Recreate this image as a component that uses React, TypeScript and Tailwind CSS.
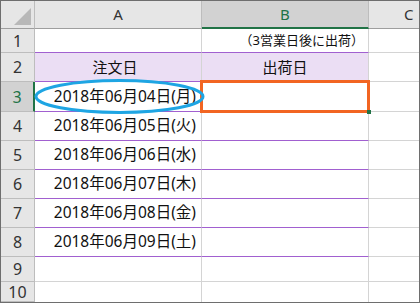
import React from "react";

const dates = [
  "2018年06月04日(月)",
  "2018年06月05日(火)",
  "2018年06月06日(水)",
  "2018年06月07日(木)",
  "2018年06月08日(金)",
  "2018年06月09日(土)",
];

const rowHeights = ["h-[30px]", "h-[29px]", "h-[29px]", "h-[29px]", "h-[29px]", "h-[29px]"];

function RowHead({ n, active = false }: { n: string; active?: boolean }) {
  return (
    <div
      className={
        active
          ? "w-[34px] shrink-0 flex items-center justify-center text-[16px] bg-[#d2d2d2] border-b border-b-[#bdbdbd] border-r-2 border-r-[#217346] text-[#217346]"
          : "w-[34px] shrink-0 flex items-center justify-center text-[16px] bg-[#e6e6e6] border-b border-r border-[#bdbdbd] text-[#333]"
      }
    >
      {n}
    </div>
  );
}

export default function App() {
  return (
    <div className="w-[420px] h-[303px] overflow-hidden bg-white border border-[#6e6e6e] font-['Noto_Sans','Noto_Sans_CJK_JP',sans-serif] text-[15px] leading-none text-[#111]">
      <div className="relative w-[418px] h-[301px]">
        {/* column headers */}
        <div className="flex h-[28px]">
          <div className="w-[34px] shrink-0 relative bg-[#e6e6e6] border-r border-r-[#bdbdbd] border-b border-b-[#9e9e9e]">
            <svg className="absolute left-0 top-0" width="33" height="27" viewBox="0 0 33 27">
              <polygon points="30,7 30,24 13,24" fill="#b8b8b8" />
            </svg>
          </div>
          <div className="w-[167px] shrink-0 flex items-center justify-center bg-[#e6e6e6] border-r border-r-[#bdbdbd] border-b border-b-[#9e9e9e] text-[#333]">
            A
          </div>
          <div className="w-[167px] shrink-0 flex items-center justify-center bg-[#d2d2d2] border-r border-r-[#bdbdbd] border-b-2 border-b-[#217346] text-[#217346]">
            B
          </div>
          <div className="flex-1 flex items-center pl-[35px] bg-[#e6e6e6] border-b border-b-[#9e9e9e] text-[#333]">
            C
          </div>
        </div>

        {/* row 1 */}
        <div className="flex h-[24px]">
          <RowHead n="1" />
          <div className="w-[167px] shrink-0 border-r border-r-[#d4d4d4] border-b border-b-[#a160d0]" />
          <div className="w-[167px] shrink-0 flex items-center justify-end pr-[4px] text-[13px] border-r border-r-[#d4d4d4] border-b border-b-[#a160d0]">
            （3営業日後に出荷）
          </div>
          <div className="flex-1 border-b border-[#d4d4d4]" />
        </div>

        {/* row 2 */}
        <div className="flex h-[29px]">
          <RowHead n="2" />
          <div className="w-[167px] shrink-0 flex items-center justify-center pr-[6px] bg-[#ebdef4] border-r border-r-[#d4d4d4] border-b border-b-[#a160d0]">
            注文日
          </div>
          <div className="w-[167px] shrink-0 flex items-center justify-center bg-[#ebdef4] border-r border-r-[#d4d4d4] border-b border-b-[#a160d0]">
            出荷日
          </div>
          <div className="flex-1 border-b border-[#d4d4d4]" />
        </div>

        {/* rows 3-8 */}
        {dates.map((d, i) => (
          <div key={d} className={`flex ${rowHeights[i]}`}>
            <RowHead n={String(i + 3)} active={i === 0} />
            <div className="w-[167px] shrink-0 flex items-center justify-end pr-[5px] text-[15.5px] border-r border-r-[#d4d4d4] border-b border-b-[#a160d0]">
              {d}
            </div>
            <div className="w-[167px] shrink-0 border-r border-r-[#d4d4d4] border-b border-b-[#a160d0]" />
            <div className="flex-1 border-b border-[#d4d4d4]" />
          </div>
        ))}

        {/* row 9 */}
        <div className="flex h-[25px]">
          <RowHead n="9" />
          <div className="w-[167px] shrink-0 border-r border-b border-[#d4d4d4]" />
          <div className="w-[167px] shrink-0 border-r border-b border-[#d4d4d4]" />
          <div className="flex-1 border-b border-[#d4d4d4]" />
        </div>

        {/* row 10 */}
        <div className="flex h-[20px]">
          <RowHead n="10" />
          <div className="w-[167px] shrink-0 border-r border-[#d4d4d4]" />
          <div className="w-[167px] shrink-0 border-r border-[#d4d4d4]" />
          <div className="flex-1" />
        </div>

        {/* active cell frame on B3 */}
        <div className="absolute left-[199px] top-[79px] w-[170px] h-[33px] border-[3px] border-[#f26522]" />
        <div className="absolute left-[366px] top-[109px] w-[4px] h-[4px] bg-[#217346]" />

        {/* highlight ring around A3 */}
        <svg className="absolute left-0 top-0 pointer-events-none" width="418" height="301" viewBox="0 0 418 301">
          <ellipse cx="118.5" cy="95.5" rx="83.5" ry="16" fill="none" stroke="#1ea5e3" strokeWidth="3" />
        </svg>
      </div>
    </div>
  );
}
